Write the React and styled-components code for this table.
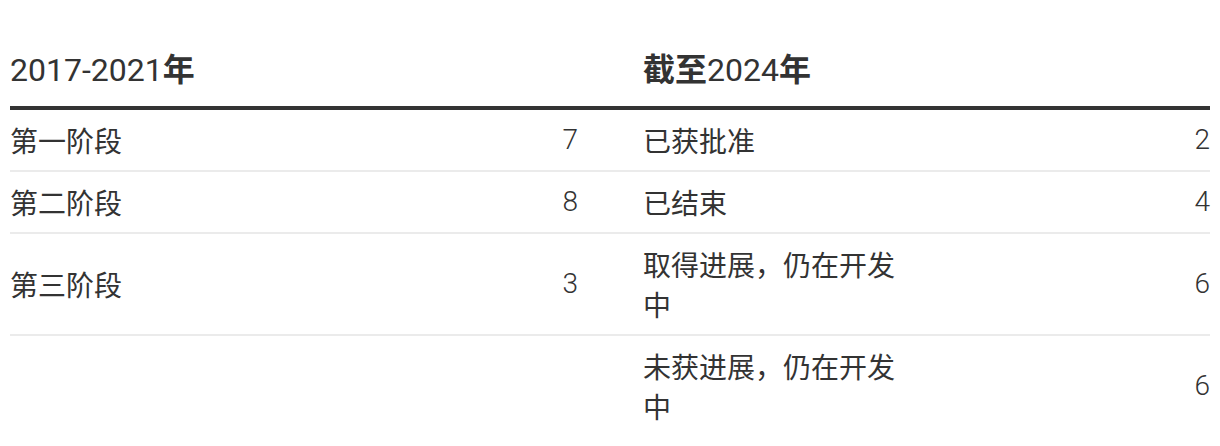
import React from "react";
import styled, { createGlobalStyle } from "styled-components";

const GlobalStyle = createGlobalStyle`
  body {
    margin: 0;
    background: #fff;
    color: #333;
    font-family: Roboto, "Noto Sans CJK SC", sans-serif;
  }
`;

const rows = [
  { left: "第一阶段", leftCount: 7, right: "已获批准", rightCount: 2 },
  { left: "第二阶段", leftCount: 8, right: "已结束", rightCount: 4 },
  { left: "第三阶段", leftCount: 3, right: "取得进展，仍在开发中", rightCount: 6 },
  { left: "", leftCount: null, right: "未获进展，仍在开发中", rightCount: 6 },
];

export const App = () => {
  return (
    <>
      <GlobalStyle />
      <StyledTable>
        <StyledHeaderRow>
          <StyledHeadCell $start={1}>
            2017-2021<StyledStrong>年</StyledStrong>
          </StyledHeadCell>
          <StyledHeadCell $start={4}>
            <StyledStrong>截至</StyledStrong>2024<StyledStrong>年</StyledStrong>
          </StyledHeadCell>
        </StyledHeaderRow>
        {rows.map((row, i) => (
          <StyledRow key={i} $last={i === rows.length - 1}>
            <StyledLabel>{row.left}</StyledLabel>
            <StyledCount>{row.leftCount}</StyledCount>
            <span />
            <StyledLabel>{row.right}</StyledLabel>
            <StyledCount>{row.rightCount}</StyledCount>
          </StyledRow>
        ))}
      </StyledTable>
    </>
  );
};
export default App;

const columns = "508px 60px 65px 260px 1fr";

const StyledTable = styled.div`
  display: flex;
  flex-direction: column;
  padding: 0 10px;
`;

const StyledHeaderRow = styled.div`
  display: grid;
  grid-template-columns: ${columns};
  padding: 50px 0 16px;
  border-bottom: 4px solid #333;
`;

const StyledHeadCell = styled.div`
  grid-column: ${(p) => p.$start} / span 2;
  font-size: 32px;
  line-height: 40px;
  font-weight: 400;
  color: #333;
`;

const StyledStrong = styled.span`
  font-weight: 700;
`;

const StyledRow = styled.div`
  display: grid;
  grid-template-columns: ${columns};
  align-items: center;
  padding: 10px 0;
  border-bottom: ${(p) => (p.$last ? "none" : "2px solid #ebebeb")};
`;

const StyledLabel = styled.div`
  font-family: "Noto Sans CJK SC", sans-serif;
  font-size: 28px;
  line-height: 40px;
  color: #333;
`;

const StyledCount = styled.div`
  font-family: Roboto, sans-serif;
  font-weight: 300;
  font-size: 28px;
  line-height: 40px;
  text-align: right;
  color: #333;
`;
